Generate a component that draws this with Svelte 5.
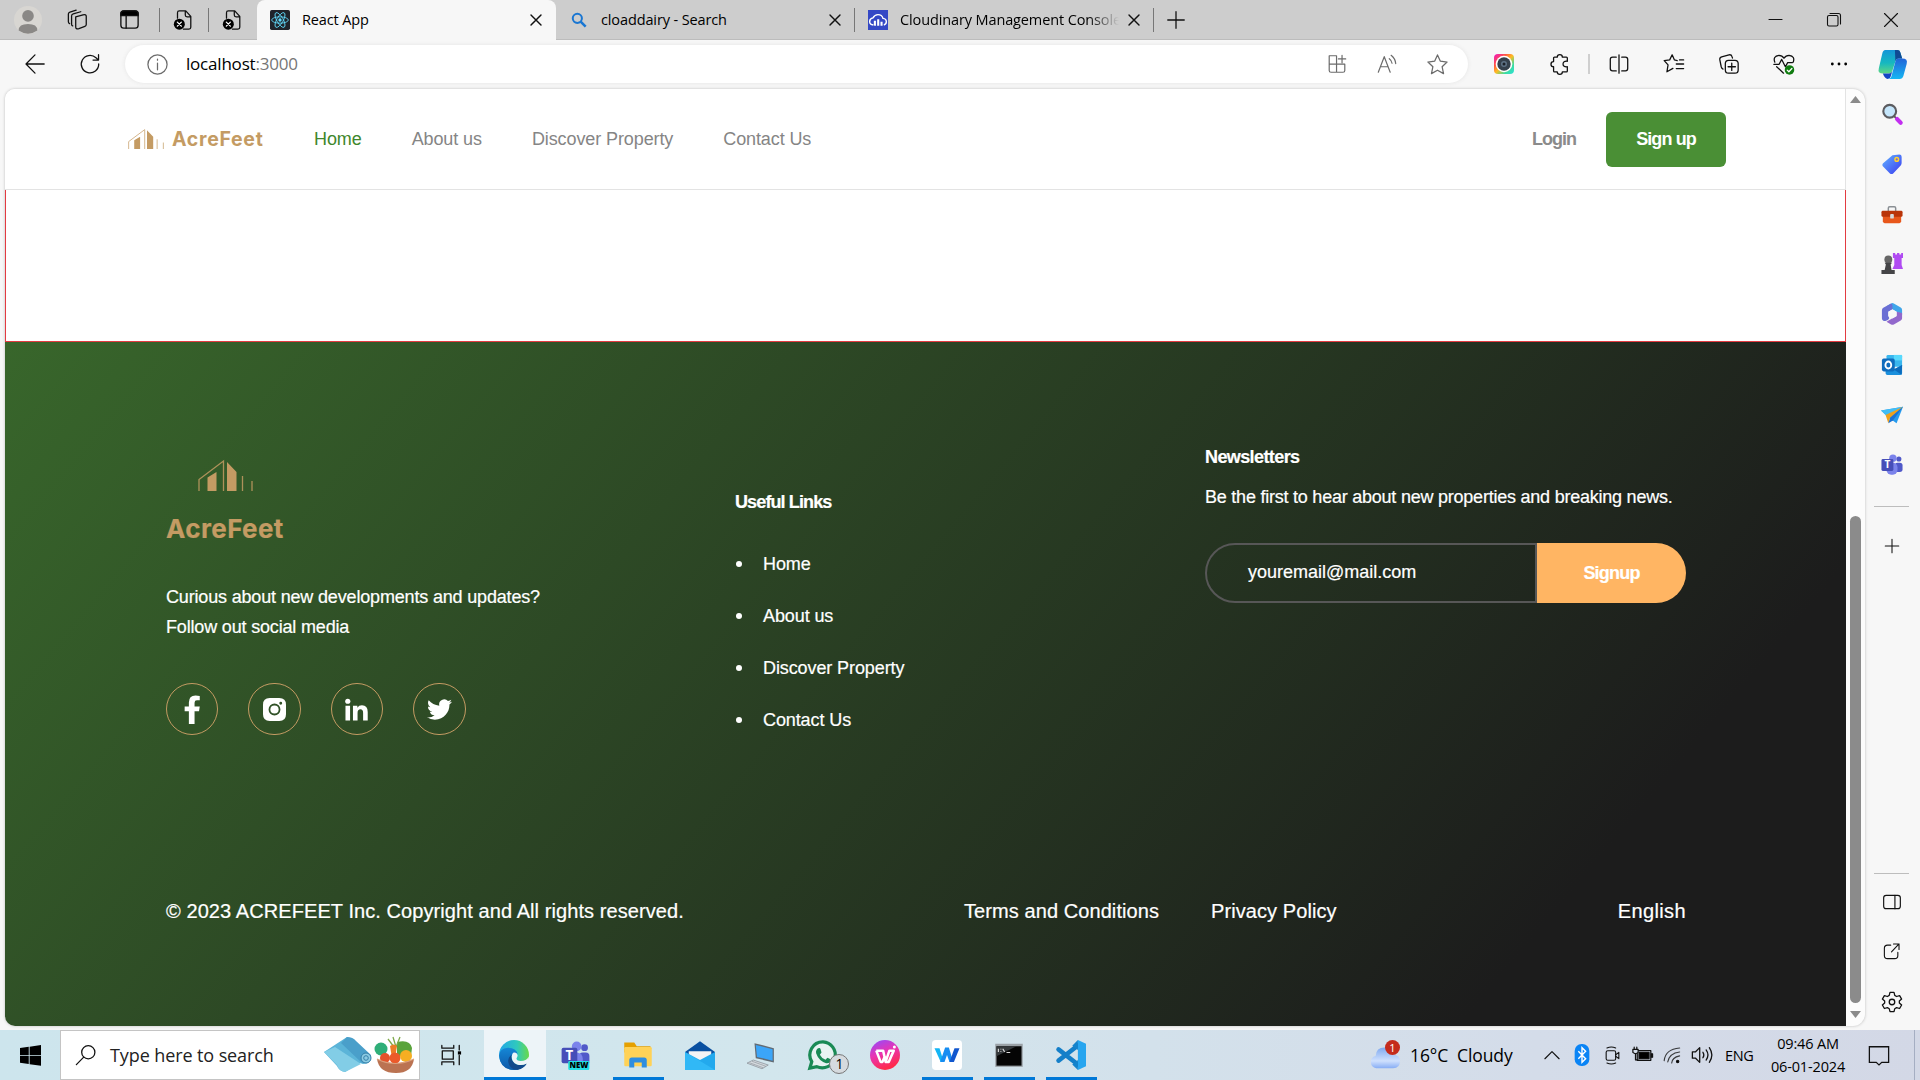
<script>
  const tabs = [
    { title: 'React App', icon: 'react', active: true },
    { title: 'cloaddairy - Search', icon: 'search', active: false },
    { title: 'Cloudinary Management Console', icon: 'cloud', active: false, fade: true }
  ];
  const navLinks = ['Home', 'About us', 'Discover Property', 'Contact Us'];
  const pinned = ['lens', 'tag', 'toolbox', 'games', 'm365', 'outlook', 'drop', 'teams'];
  const apps = [
    { icon: 'edge', state: 'focused' },
    { icon: 'teamsnew', state: '' },
    { icon: 'folder', state: 'open' },
    { icon: 'mail', state: '' },
    { icon: 'pc', state: '' },
    { icon: 'whatsapp', state: '', badge: 1 },
    { icon: 'wps', state: '' },
    { icon: 'docs', state: 'open' },
    { icon: 'cmd', state: 'open' },
    { icon: 'vscode', state: 'open' }
  ];
</script>

{#snippet line(name, size = 24)}
  <svg class="line" width={size} height={size} viewBox="0 0 24 24">
    {#if name === 'workspaces'}
      <path d="M9.500 8.500l8-2.200q3.500-.8 3.500 1.700v9q0 1.500-1.500 2l-6.500 2.300q-3.500 1-3.500-1.800zM6.200 18.500q-1.200-.5-1.200-2V7.500q0-1.800 1.800-2.300L15 3M2.800 16Q1.500 15.500 1.500 14V5.500q0-1.700 1.700-2.200L10 1.200" />
    {:else if name === 'tabmenu'}
      <rect x="3" y="3" width="18" height="18" rx="3" /><path d="M8.500 8v13" /><path d="M3 8V6q0-3 3-3h12q3 0 3 3v2z" fill="#000" />
    {:else if name === 'filex'}
      <path d="M6 10V4q0-2 2-2h7l5.500 6v12q0 2-2 2h-6M14.500 2v4.500q0 2 2 2h4" /><circle cx="8" cy="16.500" r="6" fill="#000" stroke="none" /><path d="M5.800 14.300l4.400 4.400m0-4.400l-4.400 4.400" stroke="#fff" />
    {:else if name === 'close'}
      <path d="M6 6l12 12M18 6L6 18" />
    {:else if name === 'plus'}
      <path d="M12 3v18M3 12h18" />
    {:else if name === 'back'}
      <path d="M22 12H2.500M12 2L2.200 12 12 22" />
    {:else if name === 'refresh'}
      <path d="M21.500 12A9.500 9.500 0 1 1 18.500 5.200L21 7.500M21.300 1.800v5.900h-6" />
    {:else if name === 'info'}
      <circle cx="12" cy="12" r="10" /><path d="M12 10.500v7M12 6.500v1" />
    {:else if name === 'appplus'}
      <path d="M3.500 3h8v18h-6q-2 0-2-2zM3.500 12.200h17V19q0 2-2 2h-7M17.500 2.500v8M13.500 6.500h8" />
    {:else if name === 'read'}
      <path d="M2.500 21L9 4l6.500 17M5 15h8M14.500 6.200q2.500 1.800 3 5M16.500 2.500q4.500 3.500 5 9" />
    {:else if name === 'star'}
      <path d="M12 2l3 6.600 7 .8-5.200 4.900L18.300 21.500 12 18l-6.300 3.500 1.500-7.200L2 9.400l7-.8z" />
    {:else if name === 'puzzle'}
      <path d="M9 4.500a2.800 2.800 0 0 1 5.600 0H19q1 0 1 1V9q-4.700-.5-4.700 3t4.700 3v4.500q0 1-1 1h-4.400a2.800 2.800 0 0 1-5.600 0H6q-1 0-1-1V15a2.800 2.800 0 0 1 0-5.700V5.500q0-1 1-1z" />
    {:else if name === 'split'}
      <path d="M12 2v20M9 4.500H5q-2.500 0-2.500 2.500v10q0 2.500 2.500 2.500h4M15 4.500h4q2.500 0 2.500 2.500v10q0 2.500-2.500 2.500h-4" />
    {:else if name === 'favs'}
      <path d="M15.500 8.200l-3-.6L10 2 7.300 7.500l-6 .8L5.500 13 4.300 20.500l6.500-3.700M14.500 12h8M14.500 17h8M18 7.500h4.500" />
    {:else if name === 'collections'}
      <rect x="8" y="8" width="14" height="14" rx="3.500" /><path d="M15 11v8M11 15h8M5.500 17.500q-1.500-.5-2-2.500L2 7.500Q1.600 5 4 4.300L12 2q2.600-.5 3.300 2l.5 1.500" />
    {:else if name === 'heart'}
      <path d="M2 10Q-.5 3.500 6.500 2.500q3.500 0 5.500 3.200Q14 2.500 17.500 2.500 24.500 3.500 22 10M4 15l7.500 7M1 12.500h5.500L9.500 7l4 8 2.500-4.500h5" /><circle cx="18" cy="18.500" r="5.200" fill="#107c10" stroke="none" /><path d="M15.500 18.700l1.800 1.800 3.300-3.600" stroke="#fff" />
    {:else if name === 'dots'}
      <g fill="#000" stroke="none"><circle cx="4" cy="12" r="1.700" /><circle cx="12" cy="12" r="1.700" /><circle cx="20" cy="12" r="1.700" /></g>
    {:else if name === 'panel'}
      <rect x="2" y="4" width="20" height="16" rx="3" /><path d="M15.500 4v16" />
    {:else if name === 'external'}
      <path d="M11 4H7Q3 4 3 8v9q0 4 4 4h9q4 0 4-4v-4M14.500 2.500h7v7M21.500 2.500L12 12.500" />
    {:else if name === 'gear'}
      <circle cx="12" cy="12" r="3" /><path d="M9.800 1.500h4.400l.8 3.300 2 1.200 3.300-1 2.200 3.800L20 11v2l2.500 2.300-2.200 3.800-3.300-1-2 1.200-.8 3.200H9.800L9 19.300l-2-1.200-3.300 1-2.200-3.800L4 13v-2L1.500 8.800 3.700 5 7 6l2-1.200z" />
    {:else if name === 'loupe'}
      <circle cx="14.500" cy="9" r="7.200" /><path d="M9.500 14.300L1.500 22.500" />
    {:else if name === 'taskview'}
      <path d="M2.500 7.500h12v9h-12zM2 1.500v3h13v-3M2 22.500v-3h13v3M21 1.500v5M21 12.500v10" /><rect x="19.500" y="8" width="3.500" height="3.500" fill="#000" stroke="none" />
    {:else if name === 'chevron'}
      <path d="M3.500 16.500L12 8l8.500 8.500" />
    {:else if name === 'camera'}
      <rect x="4" y="6" width="12" height="12" rx="2" /><path d="M16 11l4-3v8l-4-3M5 2.500q5.500-2.500 11 0M5 21.500q5.500 2.500 11 0" />
    {:else if name === 'battery'}
      <path d="M6 6.500h15.500v11H6z" /><path d="M8 8.500h11.500v7H8zM22 10h1.500v4H22z" fill="#000" /><path d="M1 5h6v3.500q-3 3-6 0z" fill="#d4dde9" /><path d="M2.500 5V2.500M5.500 5V2.500M4 10v7h3" />
    {:else if name === 'wifi'}
      <path d="M1.500 18.500Q3 4 21 2.500M6 20Q8 9 21 7.500M11 21.500q.5-7 10-9" opacity=".8" /><circle cx="18.500" cy="19.500" r="1.500" fill="#000" />
    {:else if name === 'speaker'}
      <path d="M1.500 8.500H5L9.500 4v16L5 15.500H1.500zM13 9q2 3 0 6M16.500 6.500q4 5.500 0 11M20 4q5.500 8 0 16" />
    {:else if name === 'notice'}
      <path d="M1.500 3h21v17h-7.500l-3 2.800L9 20H1.500z" stroke-linejoin="miter" />
    {/if}
  </svg>
{/snippet}

{#snippet art(name, size = 24)}
  <svg width={size} height={size} viewBox="0 0 24 24">
    {#if name === 'react'}
      <rect width="24" height="24" rx="2" fill="#20232a" />
      <g fill="none" stroke="#61dafb"><ellipse cx="12" cy="12" rx="10" ry="3.800" /><ellipse cx="12" cy="12" rx="10" ry="3.800" transform="rotate(60 12 12)" /><ellipse cx="12" cy="12" rx="10" ry="3.800" transform="rotate(120 12 12)" /></g><circle cx="12" cy="12" r="2" fill="#61dafb" />
    {:else if name === 'search'}
      <circle cx="10" cy="10" r="5.500" fill="none" stroke="#1976d2" stroke-width="2.400" /><path d="M14 14l6 6" stroke="#1976d2" stroke-width="3" />
    {:else if name === 'cloud'}
      <rect width="24" height="24" fill="#3448c5" /><path d="M6.500 18Q2 17.500 2 13.700q0-3.500 4-4.200Q8 5.500 12 5.500q4.800 0 6 4.500 4 .5 4 4.200 0 3-3 3.800" fill="none" stroke="#fff" stroke-width="1.700" /><path d="M7 13h2.500v6H8q-1 0-1-1zM11 11h2.500v8H11zM15 14h2.500v5H15z" fill="#fff" />
    {:else if name === 'avatar'}
      <circle cx="12" cy="12" r="12" fill="#d8d6d2" /><circle cx="12" cy="8.500" r="5" fill="#8a8886" /><path d="M4 21Q4 15.500 12 15.500T20 21Q12 26.500 4 21" fill="#8a8886" />
    {:else if name === 'recorder'}
      <rect x="2" y="2" width="20" height="20" rx="4" fill="url(#rainbow)" /><circle cx="12" cy="12" r="8.300" fill="#fff" /><circle cx="12" cy="12" r="6.700" fill="#35404c" /><circle cx="12" cy="12" r="3" fill="#5d7185" /><circle cx="12" cy="12" r="1.500" fill="#1b2028" />
    {:else if name === 'copilot'}
      <path d="M6 0h10q2 0 2.500 2L20 7h-3q-2 0-2.500 2L12 17q-.8 2.500-3 2.500H4Q-.5 19.500.7 15L3.500 3Q4.200 0 6 0z" fill="url(#copA)" />
      <path d="M14 0h2q2 0 2.500 2L20 7h-3q-2 0-2.600 2.500z" fill="#104a93" /><path d="M4 19.500h5q2.200 0 3-2.500l-1.500 5Q10 24 8 24q-2.300 0-4-4.500z" fill="#1546c5" />
      <path d="M17 7h3q5 0 3.700 4.500L21 21.500Q20.200 24 18 24H8q2.500 0 3.200-2.500L14.500 9Q15 7 17 7z" fill="url(#copB)" />
    {:else if name === 'lens'}
      <path d="M14 14l7.500 7.500" stroke="#555" stroke-width="2" /><path d="M17.500 17.500l4 4" stroke="#c22ef0" stroke-width="4.500" stroke-linecap="round" /><circle cx="9.500" cy="9" r="7" fill="#c5e6fb" stroke="#5c5c60" stroke-width="2.300" />
    {:else if name === 'tag'}
      <path d="M12.500 2.500L20 1.500q2.500 0 2.500 2.500v7q0 1.500-1 2.500l-8.500 9q-1.500 1-3 0L2 14.500q-1.200-1.500 0-3z" fill="url(#tagG)" /><circle cx="17.200" cy="7" r="2" fill="#7a6ad0" stroke="#ffd22e" stroke-width="1.600" />
    {:else if name === 'toolbox'}
      <path d="M8 9V5.500Q8 4 9.500 4h5Q16 4 16 5.500V9" fill="none" stroke="#8a8f94" stroke-width="1.600" /><path d="M2 14h20v6q0 2-2 2H4q-2 0-2-2z" fill="#e8571b" /><rect x=".5" y="8.500" width="23" height="6.500" rx="1.500" fill="#b93409" /><rect x="10" y="12" width="4" height="5" rx="1" fill="#d6d9db" />
    {:else if name === 'games'}
      <path d="M13 0h2.500v1.500h2V0h2.500v1.500h2V0h2v5.500h-1.500V13l1.500 4.500H12.500l2-4.500V5.500H13z" fill="#b04bf2" /><circle cx="8" cy="7" r="4.300" fill="#666" /><path d="M4 10.500h8l-1.500 2 1 6h3.500V23H.5v-4.500H4l1.300-6z" fill="#454547" />
    {:else if name === 'm365'}
      <path d="M6 3.500l5-3q1.500-.8 3 0l7.500 4.300Q23 5.700 23 7.500V13l-6-3.500-4.500-2.600z" fill="#3fa6ea" /><path d="M23 11v5.500q0 1.700-1.500 2.600l-7.500 4.300q-1.500.8-3 0l-5-3L12 17l5-3V9.500z" fill="#9268cc" /><path d="M11 .5l-8.500 4.800Q1 6.200 1 8v9q0 1.500 1.500 2.300Q7 21 9 16.500l-1-2.500V9.500l4.500-2.600V3q0-2-1.500-2.500z" fill="#6a6fd4" /><path d="M12.500 7l-4.500 2.500v5l4.500 2.500 4.500-2.500v-5z" fill="#f7f7f7" />
    {:else if name === 'outlook'}
      <rect x="6" y="1" width="17" height="13" rx="1.500" fill="#39b6ee" /><rect x="14" y="1" width="9" height="6" fill="#58d9fd" /><path d="M5 12l9 5 9-5v9q0 2-2 2H7q-2 0-2-2z" fill="#1a8fdc" /><path d="M23 12l-9 5 8.500 5.500z" fill="#0b6bbd" /><rect x="1" y="5" width="14" height="14" rx="2" fill="#0f6cbd" /><ellipse cx="8" cy="12" rx="3.200" ry="3.800" fill="none" stroke="#fff" stroke-width="2" />
    {:else if name === 'drop'}
      <path d="M0 7l24-4-7 18-7-5z" fill="#269bee" /><path d="M0 7l24-4L7 14z" fill="#42bdf5" /><path d="M24 3L5 12l3 9 2-6z" fill="#efa11b" /><path d="M24 3L10 15l-2 6 5-3z" fill="#1b72d3" />
    {:else if name === 'teams' || name === 'teamsnew'}
      <circle cx="19.500" cy="5.500" r="2.800" fill="#5059c9" /><rect x="15" y="9.500" width="8.500" height="10" rx="3" fill="#5059c9" /><circle cx="13" cy="4.500" r="4" fill="#7b83eb" /><rect x="6" y="9.500" width="12" height="13" rx="5" fill="#7b83eb" /><rect x=".5" y="5.500" width="13" height="13" rx="1.500" fill="#464eb8" /><text x="7" y="15.800" text-anchor="middle" font-size="11" font-weight="700" fill="#fff">T</text>
      {#if name === 'teamsnew'}<rect x="6" y="16.500" width="17.500" height="7.500" rx="1" fill="#24e0e6" /><text x="14.800" y="22.600" text-anchor="middle" font-size="6.500" font-weight="800" fill="#000">NEW</text>{/if}
    {:else if name === 'edge'}
      <circle cx="12" cy="12" r="12" fill="url(#edgeA)" /><path d="M.1 12.500Q.5 6.500 7 6.200q7 0 7.800 5.300-4-1-5.200 2.500-.5 5.500 4.400 6.500 4 .3 8-2Q18.500 24 12 24 1 23.500.1 12.500z" fill="url(#edgeB)" /><path d="M10 11.500q-4.500 4-1.500 9 2.500 3.500 6.500 3.200 5-1 7.300-5-4.300 2-8 .8Q9.500 17.500 10 11.500z" fill="#114a8b" /><path d="M11.700 10q2.800-.3 3.200 2.300-.2 1.300-.9 2.200-.3 2 3.500 2.300 4.300 0 6.200-3.500l.3 3-1.700 2.400q-4 2-7.800.8-4.500-1.500-4.300-6.500.3-2.400 1.500-3z" fill="#edf4f8" />
    {:else if name === 'folder'}
      <path d="M1 2h8l2 3h11v5H1z" fill="#e5a000" /><rect x="1" y="5.500" width="22" height="15.500" rx="1" fill="#ffd257" /><path d="M5 22v-6q0-2 2-2h10q2 0 2 2v6h-4v-4H9v4z" fill="#2f8ee0" />
    {:else if name === 'mail'}
      <path d="M0 9.500L12 1l12 8.500V14H0z" fill="#0a50a0" /><path d="M3 9h18v9H3z" fill="#f3f3f5" /><path d="M0 9.500L12 16l12-6.500V24H0z" fill="#23a9ed" /><path d="M0 9.500L24 24H0z" fill="#37bdf8" opacity=".75" />
    {:else if name === 'pc'}
      <path d="M6 2.500l15.500 4v11.500L7 14.500z" fill="#626b74" /><path d="M7 4l13.500 3.400V16.500L8 13.500z" fill="#3ba5f8" /><path d="M0 18.500l5-2.500 12 4-5 3z" fill="#d5dade" stroke="#899199" stroke-width=".6" /><path d="M2 18.200l11 4M4 17l11 4" stroke="#899199" stroke-width=".5" />
    {:else if name === 'whatsapp'}
      <path d="M12 1.500A10.400 10.400 0 1 1 7 21.300L1.500 22.500 3 17.300A10.400 10.400 0 0 1 12 1.500z" fill="#e8f3f2" stroke="#1a8a55" stroke-width="2.600" /><path d="M8 6.500q-2 1.500-1.500 4 2 6 8 8 2.500.5 4-2 .2-1-3-2.300l-1.500 1.600q-3-1-4.500-4l1.300-1.800Q10 6.500 9.500 6.300z" fill="#1a8a55" />
    {:else if name === 'wps'}
      <circle cx="12" cy="12" r="12" fill="url(#wpsG)" /><path d="M5 8.500h5.500l2 9 3-9H19l-4 9h-2.500M5 8.500l3.500 9h1.500l2-5" fill="none" stroke="#fff" stroke-width="2" stroke-linejoin="round" /><circle cx="19.500" cy="5.500" r="1.200" fill="#fff" />
    {:else if name === 'docs'}
      <rect width="24" height="24" rx="3" fill="#fff" /><path d="M2 6.500h4l3.500 11H7z" fill="#13b5f5" /><path d="M6.500 17.500L10.500 6h3L17 17.500h-3L12 12l-2 5.500z" fill="#168df2" /><path d="M22 6.500h-4l-4 11h3.500z" fill="#1257ce" />
    {:else if name === 'cmd'}
      <rect x="1" y="3" width="22" height="18.500" fill="#9aa1a6" /><rect x="2" y="5" width="20" height="15.500" fill="#050505" /><path d="M2 5h16L2 13z" fill="#34383b" /><path d="M3.500 7v2.500M5.500 7v.6M5.500 9v.6M7 7l1.500 2.500M10 10h3" stroke="#ddd" stroke-width=".9" />
    {:else if name === 'vscode'}
      <path d="M2 7.500L18 20M2 16.500L18 4" stroke="#147fc9" stroke-width="3.600" stroke-linecap="round" /><path d="M17.500 0L24 3v18l-6.500 3z" fill="#27a5ef" /><path d="M17.500 0v24L13 19.500l4.500-3.500V8L13 4.500z" fill="#1483cc" />
    {:else if name === 'windows'}
      <path d="M0 3.500l10-1.400v9.300H0zM11 2l13-1.900v11.300H11zM0 12.400h10v9.400L0 20.400zM11 12.400h13v11.400L11 22z" />
    {:else if name === 'weather'}
      <path d="M5 22.500a5 5 0 0 1-.5-9.800Q5 6 11.500 6q5.500 0 7 5.500Q24 12 24 17q0 5.500-5.500 5.500z" fill="url(#cloudG)" />
    {:else if name === 'bluetooth'}
      <rect x="4" width="16" height="24" rx="7.500" fill="#0a84f5" /><path d="M8 8l8 8-4 4V4l4 4-8 8" fill="none" stroke="#fff" stroke-width="1.500" />
    {:else if name === 'facebook'}
      <path d="M9 24V13.500H5.500v-4H9V6.300Q9 .5 14.500.5q2 0 3.500.3v3.600h-2.300q-2 0-2 2v3.100H18l-.6 4h-3.700V24z" fill="#fff" />
    {:else if name === 'instagram'}
      <path fill-rule="evenodd" d="M7 0h10q7 0 7 7v10q0 7-7 7H7q-7 0-7-7V7q0-7 7-7zM12 5.800a6.200 6.200 0 1 0 0 12.400 6.200 6.200 0 0 0 0-12.400zM18.500 4a1.500 1.500 0 1 0 0 3 1.500 1.500 0 0 0 0-3z" fill="#fff" /><circle cx="12" cy="12" r="4.300" fill="#fff" />
    {:else if name === 'linkedin'}
      <circle cx="2.900" cy="3.400" r="2.700" fill="#fff" /><path d="M.5 8h4.800v15.500H.5zM8.300 8h4.600v2.100q1.500-2.500 4.800-2.500 6 0 6 7v8.900h-4.800V15.600q0-3.900-2.800-3.900-3 0-3 3.900v7.900H8.300z" fill="#fff" />
    {:else if name === 'twitter'}
      <path fill="#fff" d="M23.953 4.570a10 10 0 01-2.825.775 4.958 4.958 0 002.163-2.723c-.951.555-2.005.959-3.127 1.184a4.920 4.920 0 00-8.384 4.482C7.690 8.095 4.067 6.130 1.640 3.162a4.822 4.822 0 00-.666 2.475c0 1.710.870 3.213 2.188 4.096a4.904 4.904 0 01-2.228-.616v.060a4.923 4.923 0 003.946 4.827 4.996 4.996 0 01-2.212.085 4.936 4.936 0 004.604 3.417 9.867 9.867 0 01-6.102 2.105c-.390 0-.779-.023-1.170-.067a13.995 13.995 0 007.557 2.209c9.053 0 13.998-7.496 13.998-13.985 0-.210 0-.420-.015-.630A9.935 9.935 0 0024 4.590z" />
    {/if}
  </svg>
{/snippet}

{#snippet building(w, h)}
  <svg class="building" width={w} height={h} viewBox="0 0 55 31" preserveAspectRatio="none">
    <path d="M1 31V19.500L25.500 1V31" fill="none" stroke="#c49b63" stroke-width="1.300" opacity=".85" />
    <path d="M9.500 31V17.500L18.500 12v19zM29 31V2l9.500 10v19z" fill="#c49b63" />
    <path d="M44.500 16v15M54 21v10" stroke="#c49b63" stroke-width="1.300" opacity=".85" />
  </svg>
{/snippet}

<svg class="defs" width="0" height="0">
  <defs>
    <linearGradient id="rainbow" x1="0" y1="0" x2="1" y2="1"><stop offset="0" stop-color="#f012c8" /><stop offset=".3" stop-color="#f54" /><stop offset=".5" stop-color="#fb2" /><stop offset=".75" stop-color="#3ddca0" /><stop offset="1" stop-color="#2ae0d8" /></linearGradient>
    <linearGradient id="copA" x1="0" y1="0" x2="0" y2="1"><stop offset="0" stop-color="#1595d8" /><stop offset=".55" stop-color="#16b8c0" /><stop offset="1" stop-color="#5fd783" /></linearGradient>
    <linearGradient id="copB" x1="0" y1="0" x2="0" y2="1"><stop offset="0" stop-color="#2264d8" /><stop offset="1" stop-color="#16b7f3" /></linearGradient>
    <linearGradient id="tagG" x1="0" y1="0" x2="1" y2="1"><stop offset="0" stop-color="#62b5ff" /><stop offset="1" stop-color="#3a3af0" /></linearGradient>
    <linearGradient id="edgeA" x1="0" y1="0" x2="1" y2="0"><stop offset="0" stop-color="#22a6e8" /><stop offset=".6" stop-color="#2fc9bd" /><stop offset="1" stop-color="#6ad948" /></linearGradient>
    <linearGradient id="edgeB" x1="0" y1="0" x2="0" y2="1"><stop offset="0" stop-color="#1587d6" /><stop offset="1" stop-color="#0d58a8" /></linearGradient>
    <linearGradient id="wpsG" x1="0" y1="0" x2=".4" y2="1"><stop offset="0" stop-color="#8d4dff" /><stop offset=".5" stop-color="#e834b4" /><stop offset="1" stop-color="#ff2a4c" /></linearGradient>
    <linearGradient id="cloudG" x1="0" y1="0" x2="0" y2="1"><stop offset="0" stop-color="#7fa9f0" /><stop offset=".65" stop-color="#cfe0fd" /><stop offset="1" stop-color="#88aef5" /></linearGradient>
  </defs>
</svg>

<div class="screen">
  <header class="tabbar">
    <span class="slot profile">{@render art('avatar', 28)}</span>
    <span class="slot spaces">{@render line('workspaces', 22)}</span>
    <span class="slot tabmenu">{@render line('tabmenu', 23)}</span>
    <span class="slot pin">{@render line('filex', 22)}</span>
    <span class="slot pin">{@render line('filex', 22)}</span>
    {#each tabs as tab}
      <div class="tab" class:active={tab.active}>
        {@render art(tab.icon, 20)}
        <span class="title" class:fade={tab.fade}>{tab.title}</span>
        <span class="x">{@render line('close', 20)}</span>
      </div>
    {/each}
    <span class="slot newtab">{@render line('plus', 22)}</span>
    <div class="window">
      <span class="slot"><svg class="line" width="14" height="14" viewBox="0 0 14 14"><path d="M0 6.500h13" /></svg></span>
      <span class="slot"><svg class="line" width="14" height="14" viewBox="0 0 14 14"><rect x=".5" y="2.500" width="10.500" height="10.500" rx="1.500" /><path d="M3 .5h8.500q2 0 2 2V11" /></svg></span>
      <span class="slot"><svg class="line" width="14" height="14" viewBox="0 0 14 14"><path d="M.5.5l13 13M13.500.5l-13 13" /></svg></span>
    </div>
  </header>

  <div class="toolbar">
    <span class="slot tool">{@render line('back', 22)}</span>
    <span class="slot tool">{@render line('refresh', 22)}</span>
    <div class="address">
      <span class="dim">{@render line('info', 23)}</span>
      <span class="url">localhost<i>:3000</i></span>
      <span class="dim act">{@render line('appplus', 22)}</span>
      <span class="dim act">{@render line('read', 22)}</span>
      <span class="dim act">{@render line('star', 23)}</span>
    </div>
    <span class="slot ext">{@render art('recorder', 24)}</span>
    <span class="slot ext">{@render line('puzzle', 22)}</span>
    <span class="rule"></span>
    {#each ['split', 'favs', 'collections', 'heart', 'dots'] as name}
      <span class="slot tool">{@render line(name, name === 'dots' ? 20 : 22)}</span>
    {/each}
    <span class="slot copilot">{@render art('copilot', 29)}</span>
  </div>

  <div class="middle">
    <div class="frame">
      <div class="page">
        <nav>
          <div class="brand">{@render building(36, 20)}<b>AcreFeet</b></div>
          {#each navLinks as link, i}
            <a class:current={i === 0}>{link}</a>
          {/each}
          <span class="login">Login</span>
          <button class="signup">Sign up</button>
        </nav>
        <section class="blank"></section>
        <footer>
          <div class="cols">
            <div class="about">
              {@render building(55, 31)}
              <b>AcreFeet</b>
              <p>Curious about new developments and updates?<br />Follow out social media</p>
              <div class="social">
                <span>{@render art('facebook', 29)}</span>
                <span>{@render art('instagram', 23)}</span>
                <span>{@render art('linkedin', 23)}</span>
                <span>{@render art('twitter', 25)}</span>
              </div>
            </div>
            <div class="links">
              <h4>Useful Links</h4>
              <ul>
                {#each navLinks as link}<li>{link}</li>{/each}
              </ul>
            </div>
            <div class="news">
              <h4>Newsletters</h4>
              <p>Be the first to hear about new properties and breaking news.</p>
              <div class="form">
                <span class="email">youremail@mail.com</span>
                <button>Signup</button>
              </div>
            </div>
          </div>
          <div class="legal">
            <span class="copy">© 2023 ACREFEET Inc. Copyright and All rights reserved.</span>
            <span class="terms">Terms and Conditions</span>
            <span>Privacy Policy</span>
            <span class="lang">English</span>
          </div>
        </footer>
      </div>
      <div class="scroll">
        <svg width="11" height="7" viewBox="0 0 11 7"><path d="M0 7L5.500 0 11 7z" fill="#8b8b8b" /></svg>
        <div class="thumb"></div>
        <svg width="11" height="7" viewBox="0 0 11 7"><path d="M0 0h11L5.500 7z" fill="#8b8b8b" /></svg>
      </div>
    </div>
    <aside>
      {#each pinned as name}
        <span class="slot">{@render art(name, 22)}</span>
      {/each}
      <hr />
      <span class="slot add">{@render line('plus', 18)}</span>
      <hr class="low" />
      <span class="slot">{@render line('panel', 20)}</span>
      <span class="slot">{@render line('external', 19)}</span>
      <span class="slot">{@render line('gear', 22)}</span>
    </aside>
  </div>

  <div class="taskbar">
    <span class="slot start">{@render art('windows', 21)}</span>
    <div class="find">
      {@render line('loupe', 22)}
      <span>Type here to search</span>
      <svg class="deco" width="92" height="36" viewBox="0 0 92 36">
        <path d="M0 15L23 0l7 3 17 17q0 7-8 7l-3-1-15 9q-6-1-8-6Z" fill="#5bb4d8" /><path d="M0 15l11-5 26 17-16 8q-6-1-8-7z" fill="#82cde6" /><path d="M23 0q6 0 9 4l15 14q0 9-9 8L17 6z" fill="#4a9fca" /><circle cx="42" cy="21" r="5" fill="#8ccbe3" stroke="#347fa8" /><circle cx="42" cy="21" r="2.300" fill="none" stroke="#347fa8" />
        <circle cx="57" cy="12" r="6.500" fill="#2fae78" /><path d="M73 5q13-3 15 6l-1 8H73z" fill="#5aa33c" /><path d="M69 0l3 10M64 2l6 8M76 0l-4 10" stroke="#7fa84a" stroke-width="1.300" /><path d="M66 9q4-3 7 0l-2 12h-3z" fill="#ed7d27" /><circle cx="61" cy="21" r="5" fill="#e4532b" /><circle cx="71" cy="21" r="5.500" fill="#ec5a2a" /><circle cx="82" cy="19" r="6" fill="#f6ae22" /><path d="M53 22q18 8 37 0-2 14-18 14-17 0-19-14z" fill="#bb7352" /><path d="M53 22q18 9 37 0" fill="none" stroke="#dca07c" stroke-width="1.200" />
      </svg>
    </div>
    <span class="slot view">{@render line('taskview', 22)}</span>
    {#each apps as app}
      <span class="slot app {app.state}">
        {@render art(app.icon, app.icon === 'teamsnew' ? 29 : 30)}
        {#if app.badge}<em class="count">{app.badge}</em>{/if}
      </span>
    {/each}
    <div class="tray">
      <span class="weather">{@render art('weather', 30)}<em>1</em></span>
      <span class="temp">16°C&nbsp; Cloudy</span>
      <span class="slot">{@render line('chevron', 20)}</span>
      <span class="slot">{@render art('bluetooth', 22)}</span>
      <span class="slot">{@render line('camera', 19)}</span>
      <span class="slot">{@render line('battery', 21)}</span>
      <span class="slot">{@render line('wifi', 19)}</span>
      <span class="slot">{@render line('speaker', 22)}</span>
      <span class="eng">ENG</span>
      <span class="clock">09:46 AM<br />06-01-2024</span>
      <span class="slot notice">{@render line('notice', 22)}</span>
      <span class="peek"></span>
    </div>
  </div>
</div>

<style>
  :global(body) { overflow: hidden; }
  .screen { width: 1920px; height: 1080px; display: flex; flex-direction: column; background: #f7f7f7; color: #000; font-family: 'Open Sans', 'Noto Sans', sans-serif; }
  .screen * { box-sizing: border-box; }
  svg { display: block; flex: none; overflow: visible; }
  .line { fill: none; stroke: #111; stroke-width: 1.4; stroke-linecap: round; stroke-linejoin: round; }
  .slot { display: flex; align-items: center; justify-content: center; flex: none; }

  .tabbar { height: 40px; flex: none; display: flex; background: #cdcdcd; border-bottom: 1px solid #bcbcbc; }
  .profile { width: 56px; }
  .spaces { width: 44px; }
  .tabmenu { width: 59px; }
  .pin { width: 49px; padding-right: 1px; background: linear-gradient(#777, #777) 0 50% / 1px 24px no-repeat; }
  .tab { width: 299px; height: 40px; flex: none; display: flex; align-items: center; padding: 0 10px 0 13px; font-size: 14.5px; letter-spacing: -0.12px; background: linear-gradient(#777, #777) 100% 50% / 1px 24px no-repeat; }
  .tab.active { background: #f7f7f7; border-radius: 8px 8px 0 0; }
  .title { margin-left: 12px; padding-bottom: 1px; width: 219px; white-space: nowrap; overflow: hidden; }
  .fade { mask-image: linear-gradient(90deg, #000 86%, transparent); }
  .x { margin-left: 5px; }
  .x .line { stroke-width: 1.7; }
  .newtab { width: 44px; }
  .window { display: flex; margin-left: auto; }
  .window .slot { width: 57.500px; }
  .window .line { stroke-width: 1.1; }

  .toolbar { height: 48px; flex: none; display: flex; align-items: center; padding-left: 7px; }
  .tool { width: 55px; }
  .address { width: 1343px; height: 38px; margin-left: 8px; border-radius: 19px; background: #fff; box-shadow: 0 0 4px #e4e4e4; display: flex; align-items: center; padding: 0 19px 0 21px; }
  .dim .line { stroke: #6b6b6b; stroke-width: 1.3; }
  .url { margin-left: 17px; flex: 1; padding-bottom: 2px; font-size: 17px; letter-spacing: -0.2px; }
  .url i { font-style: normal; color: #767676; }
  .act { margin-left: 28px; }
  .ext { width: 56px; margin-left: 8px; }
  .ext + .ext { margin-left: 0; width: 55px; }
  .rule { width: 2px; height: 20px; background: #cfcfcf; margin: 0 1px 0 1px; }
  .copilot { width: 54px; padding-right: 2px; }

  .middle { height: 942px; flex: none; display: flex; }
  .frame { width: 1860px; height: 937px; margin: 1px 0 0 5px; display: flex; border-radius: 10px 12px 12px 10px; overflow: hidden; box-shadow: 0 0 3px #bbb; background: #fcfcfc; }
  .page { width: 1841px; flex: none; display: flex; flex-direction: column; font-family: 'Liberation Sans', Arial, sans-serif; font-size: 18px; }
  nav { height: 101px; flex: none; display: flex; align-items: center; padding: 0 119px 0 123px; background: #fff; border-bottom: 1px solid #e3e3e3; border-right: 1px solid #e3e3e3; }
  .brand { display: flex; align-items: center; width: 136px; }
  .brand b { margin-left: 8px; font: 700 19.500px 'Inter', sans-serif; letter-spacing: 0.7px; color: #c49b63; }
  nav a { margin-left: 50px; color: #858585; letter-spacing: -0.1px; }
  nav a.current { color: #40872c; }
  .login { margin-left: auto; font-weight: 700; color: #8b8b8b; letter-spacing: -1px; }
  .signup { width: 120px; height: 55px; margin-left: 30px; border: 0; border-radius: 6px; background: #4a8f35; color: #fff; font: 700 18px 'Liberation Sans', sans-serif; letter-spacing: -0.9px; }
  .blank { height: 152px; flex: none; background: #fff; border: 1px solid #e33b41; border-top: 0; }
  footer { flex: 1; color: #fff; background: linear-gradient(130deg, #38662b 0%, #1c1c1c 84%); padding: 104px 160px 0 161px; -webkit-text-stroke: 0.2px; }
  .cols { display: grid; grid-template-columns: 569px 470px 481px; height: 436px; }
  .about .building { margin: 14px 0 0 32px; }
  .about b { display: block; margin-top: 20px; font: 700 26px/36px 'Inter', sans-serif; letter-spacing: 0.4px; color: #c49b63; }
  .about p { margin: 35px 0 0; line-height: 30px; letter-spacing: -0.17px; }
  .social { display: flex; gap: 30px; margin-top: 41px; }
  .social span { width: 52.400px; height: 52.400px; border: 1px solid #c49b63; border-radius: 50%; display: flex; align-items: center; justify-content: center; }
  h4 { margin: 0; font-size: 18px; line-height: 22px; letter-spacing: -0.88px; }
  .links h4 { margin-top: 45px; }
  ul { margin: 40px 0 0; padding: 0 0 0 1px; display: grid; gap: 30px; line-height: 22px; letter-spacing: -0.1px; list-style: none; }
  li { display: flex; align-items: center; }
  li::before { content: ''; width: 6px; height: 6px; margin-right: 21px; border-radius: 50%; background: #fff; }
  .news h4 { letter-spacing: -0.6px; }
  .news p { margin: 18px 0 0; line-height: 22px; letter-spacing: -0.23px; white-space: nowrap; }
  .form { display: flex; margin-top: 35px; height: 60px; }
  .email { width: 332px; border: 2px solid #575757; border-radius: 30px 0 0 30px; padding-left: 41px; line-height: 54px; }
  .form button { width: 149px; border: 0; border-radius: 0 30px 30px 0; background: #ffb563; color: #fff; font: 700 18px 'Liberation Sans', sans-serif; letter-spacing: -0.8px; }
  .legal { display: flex; margin-top: 17px; font-size: 20px; line-height: 24px; letter-spacing: 0.08px; white-space: nowrap; }
  .copy { width: 798px; }
  .terms { width: 247px; }
  .lang { margin-left: auto; letter-spacing: 0.38px; }

  .scroll { width: 19px; display: flex; flex-direction: column; align-items: center; padding: 7px 0 8px 0; }
  .thumb { width: 11px; height: 487px; margin: auto 0 8px; border-radius: 6px; background: #8b8b8b; }

  aside { width: 55px; display: flex; flex-direction: column; padding: 1px 2px 3px 0; align-items: center; }
  aside .slot { height: 50.100px; width: 50px; }
  hr { width: 35px; height: 1px; border: 0; margin: 16px 0 0; background: #bdbdbd; }
  .add { margin-top: 14px; }
  hr.low { margin: auto 0 3px; }

  .taskbar { height: 50px; flex: none; display: flex; background: linear-gradient(90deg, #cde5ed, #d2e6ed 40%, #d4dce9 80%, #d3d8e6); }
  .start { width: 60px; }
  .find { width: 360px; background: #fff; border: 1px solid #c4c4c4; display: flex; align-items: center; padding-left: 14px; font-size: 18px; color: #222; }
  .find span { width: 214px; margin-left: 13px; letter-spacing: -0.1px; white-space: nowrap; }
  .view { width: 64px; padding-right: 3px; }
  .app { width: 61.900px; padding-right: 2px; position: relative; background: linear-gradient(#0078d7, #0078d7) 45% 100% / 0 3px no-repeat; }
  .app.open { background-size: 51px 3px; }
  .app.focused { background: linear-gradient(#0078d7, #0078d7) 0 100% / 100% 3px no-repeat #edf4f8; }
  .count { position: absolute; left: 36px; top: 24px; width: 20px; height: 20px; border: 1px solid #777; border-radius: 50%; background: #d5dade; font-style: normal; font-size: 14px; line-height: 18px; text-align: center; }
  .tray { height: 50px; margin-left: auto; display: flex; align-items: center; }
  .weather { position: relative; }
  .weather em { position: absolute; right: 0; top: 0; width: 15px; height: 15px; border-radius: 50%; background: #c42b1c; color: #fff; font-style: normal; font-size: 11px; line-height: 15px; text-align: center; }
  .temp { width: 127px; margin-left: 10px; font-size: 17.500px; letter-spacing: -0.1px; white-space: nowrap; }
  .tray .slot { width: 30px; }
  .eng { width: 37px; margin-left: 8px; font-size: 14.500px; letter-spacing: -0.3px; }
  .clock { width: 92px; font-size: 14.500px; line-height: 23px; text-align: center; letter-spacing: -0.15px; }
  .tray .notice { width: 50px; }
  .peek { width: 6px; height: 50px; margin-left: 10px; border-left: 1px solid #a5aec2; }
</style>
